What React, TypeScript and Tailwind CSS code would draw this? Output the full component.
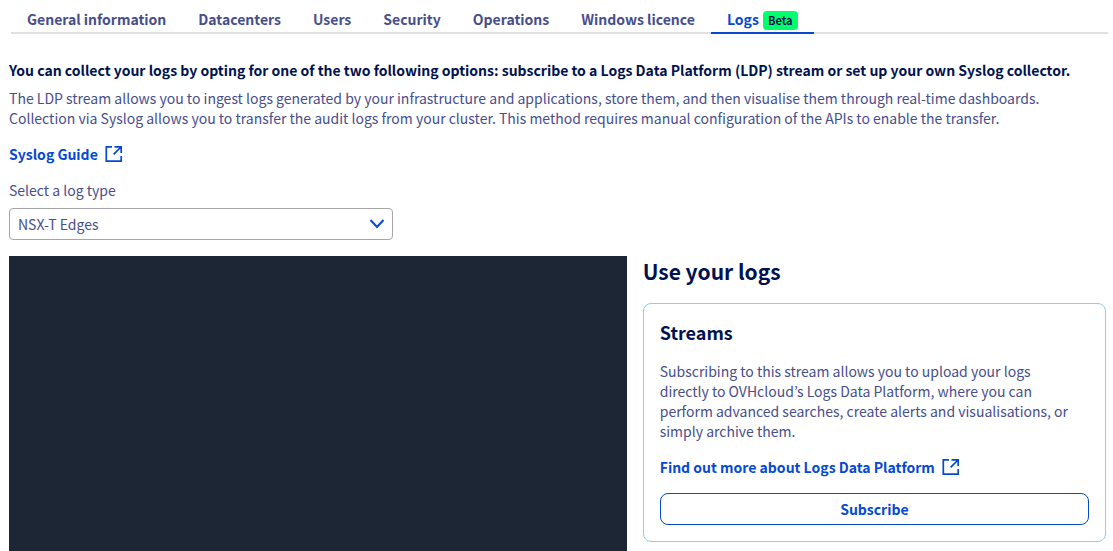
import { useState } from 'react';

const tabs = [
  { id: 'general', label: 'General information' },
  { id: 'datacenters', label: 'Datacenters' },
  { id: 'users', label: 'Users' },
  { id: 'security', label: 'Security' },
  { id: 'operations', label: 'Operations' },
  { id: 'licence', label: 'Windows licence' },
  { id: 'logs', label: 'Logs', beta: true },
];

const logTypes = ['NSX-T Edges', 'NSX-T Managers', 'ESXi', 'vCenter'];

function ExternalIcon() {
  return (
    <svg className="h-[18px] w-[18px] shrink-0" viewBox="0 0 18 18" fill="none" stroke="currentColor" strokeWidth="1.7" aria-hidden="true">
      <path d="M7 1.8H1.3V16.2H16.2V11" />
      <path d="M9.5 1.8H16.2V8M16 2L8.6 9.4" />
    </svg>
  );
}

function ExternalLink({ label }: { label: string }) {
  return (
    <a href="#" className="inline-flex items-center gap-[7px] font-bold text-[#0549d3] hover:underline">
      {label}
      <ExternalIcon />
    </a>
  );
}

export default function App() {
  const [activeTab, setActiveTab] = useState('logs');
  const [logType, setLogType] = useState(logTypes[0]);

  return (
    <div className="flex min-h-screen flex-col bg-white font-['Noto_Sans_CJK_KR',sans-serif] text-[14px] leading-5 text-[#474e8c]">
      {/* Tabs */}
      <nav className="mr-[5px] ml-[11px] flex h-[34px] border-b-2 border-[#e0e0e0]">
        {tabs.map((tab) => (
          <a
            key={tab.id}
            href={`#${tab.id}`}
            aria-current={tab.id === activeTab ? 'page' : undefined}
            onClick={() => setActiveTab(tab.id)}
            className={`flex h-[34px] items-center gap-1 border-b-2 px-4 pt-[6px] font-bold whitespace-nowrap ${
              tab.id === activeTab ? 'border-[#0549d3] text-[#0549d3]' : 'border-transparent'
            }`}
          >
            {tab.label}
            {tab.beta && (
              <span className="mt-[2px] rounded bg-[#00ff6c] px-[5px] text-[11px] leading-[19px] text-[#00124f]">Beta</span>
            )}
          </a>
        ))}
      </nav>

      <main className="flex flex-1 flex-col pt-[26px] pr-[7px] pl-[9px]">
        <h2 className="font-bold text-[#00124f]">
          You can collect your logs by opting for one of the two following options: subscribe to a Logs Data Platform (LDP) stream or set up your own Syslog collector.
        </h2>
        <p className="mt-2">
          The LDP stream allows you to ingest logs generated by your infrastructure and applications, store them, and then visualise them through real-time dashboards.
          <br />
          Collection via Syslog allows you to transfer the audit logs from your cluster. This method requires manual configuration of the APIs to enable the transfer.
        </p>

        <div className="mt-4 flex">
          <ExternalLink label="Syslog Guide" />
        </div>

        {/* Log type */}
        <label htmlFor="log-type" className="mt-4 self-start">
          Select a log type
        </label>
        <div className="relative mt-2 w-96">
          <select
            id="log-type"
            value={logType}
            onChange={(e) => setLogType(e.target.value)}
            className="block h-8 w-full appearance-none rounded border border-[#a6a6a6] bg-white px-2"
          >
            {logTypes.map((type) => (
              <option key={type}>{type}</option>
            ))}
          </select>
          <svg
            className="pointer-events-none absolute top-2 right-2 h-4 w-4 text-[#0549d3]"
            viewBox="0 0 16 16"
            fill="none"
            stroke="currentColor"
            strokeWidth="2"
            aria-hidden="true"
          >
            <path d="M1.5 4L8 11L14.5 4" />
          </svg>
        </div>

        <div className="mt-4 grid flex-1 grid-cols-[4fr_3fr] gap-4">
          {/* Live log output */}
          <div className="bg-[#1d2634]" role="log" aria-label="Logs" />

          <section className="pb-[9px]">
            <h3 className="text-[21px] leading-[30px] font-bold text-[#00124f]">Use your logs</h3>
            <div className="mt-[17px] rounded-lg border border-[#80d2f8] p-4">
              <h4 className="text-[18px] leading-6 font-bold text-[#00124f]">Streams</h4>
              <p className="mt-[17px] pr-3">
                Subscribing to this stream allows you to upload your logs directly to OVHcloud’s Logs Data Platform, where you can perform advanced searches, create alerts and visualisations, or simply archive them.
              </p>
              <div className="mt-4 flex">
                <ExternalLink label="Find out more about Logs Data Platform" />
              </div>
              <button
                type="button"
                className="mt-4 h-8 w-full rounded-lg border border-[#0549d3] font-bold text-[#0549d3] hover:bg-[#bef1ff]"
              >
                Subscribe
              </button>
            </div>
          </section>
        </div>
      </main>
    </div>
  );
}
